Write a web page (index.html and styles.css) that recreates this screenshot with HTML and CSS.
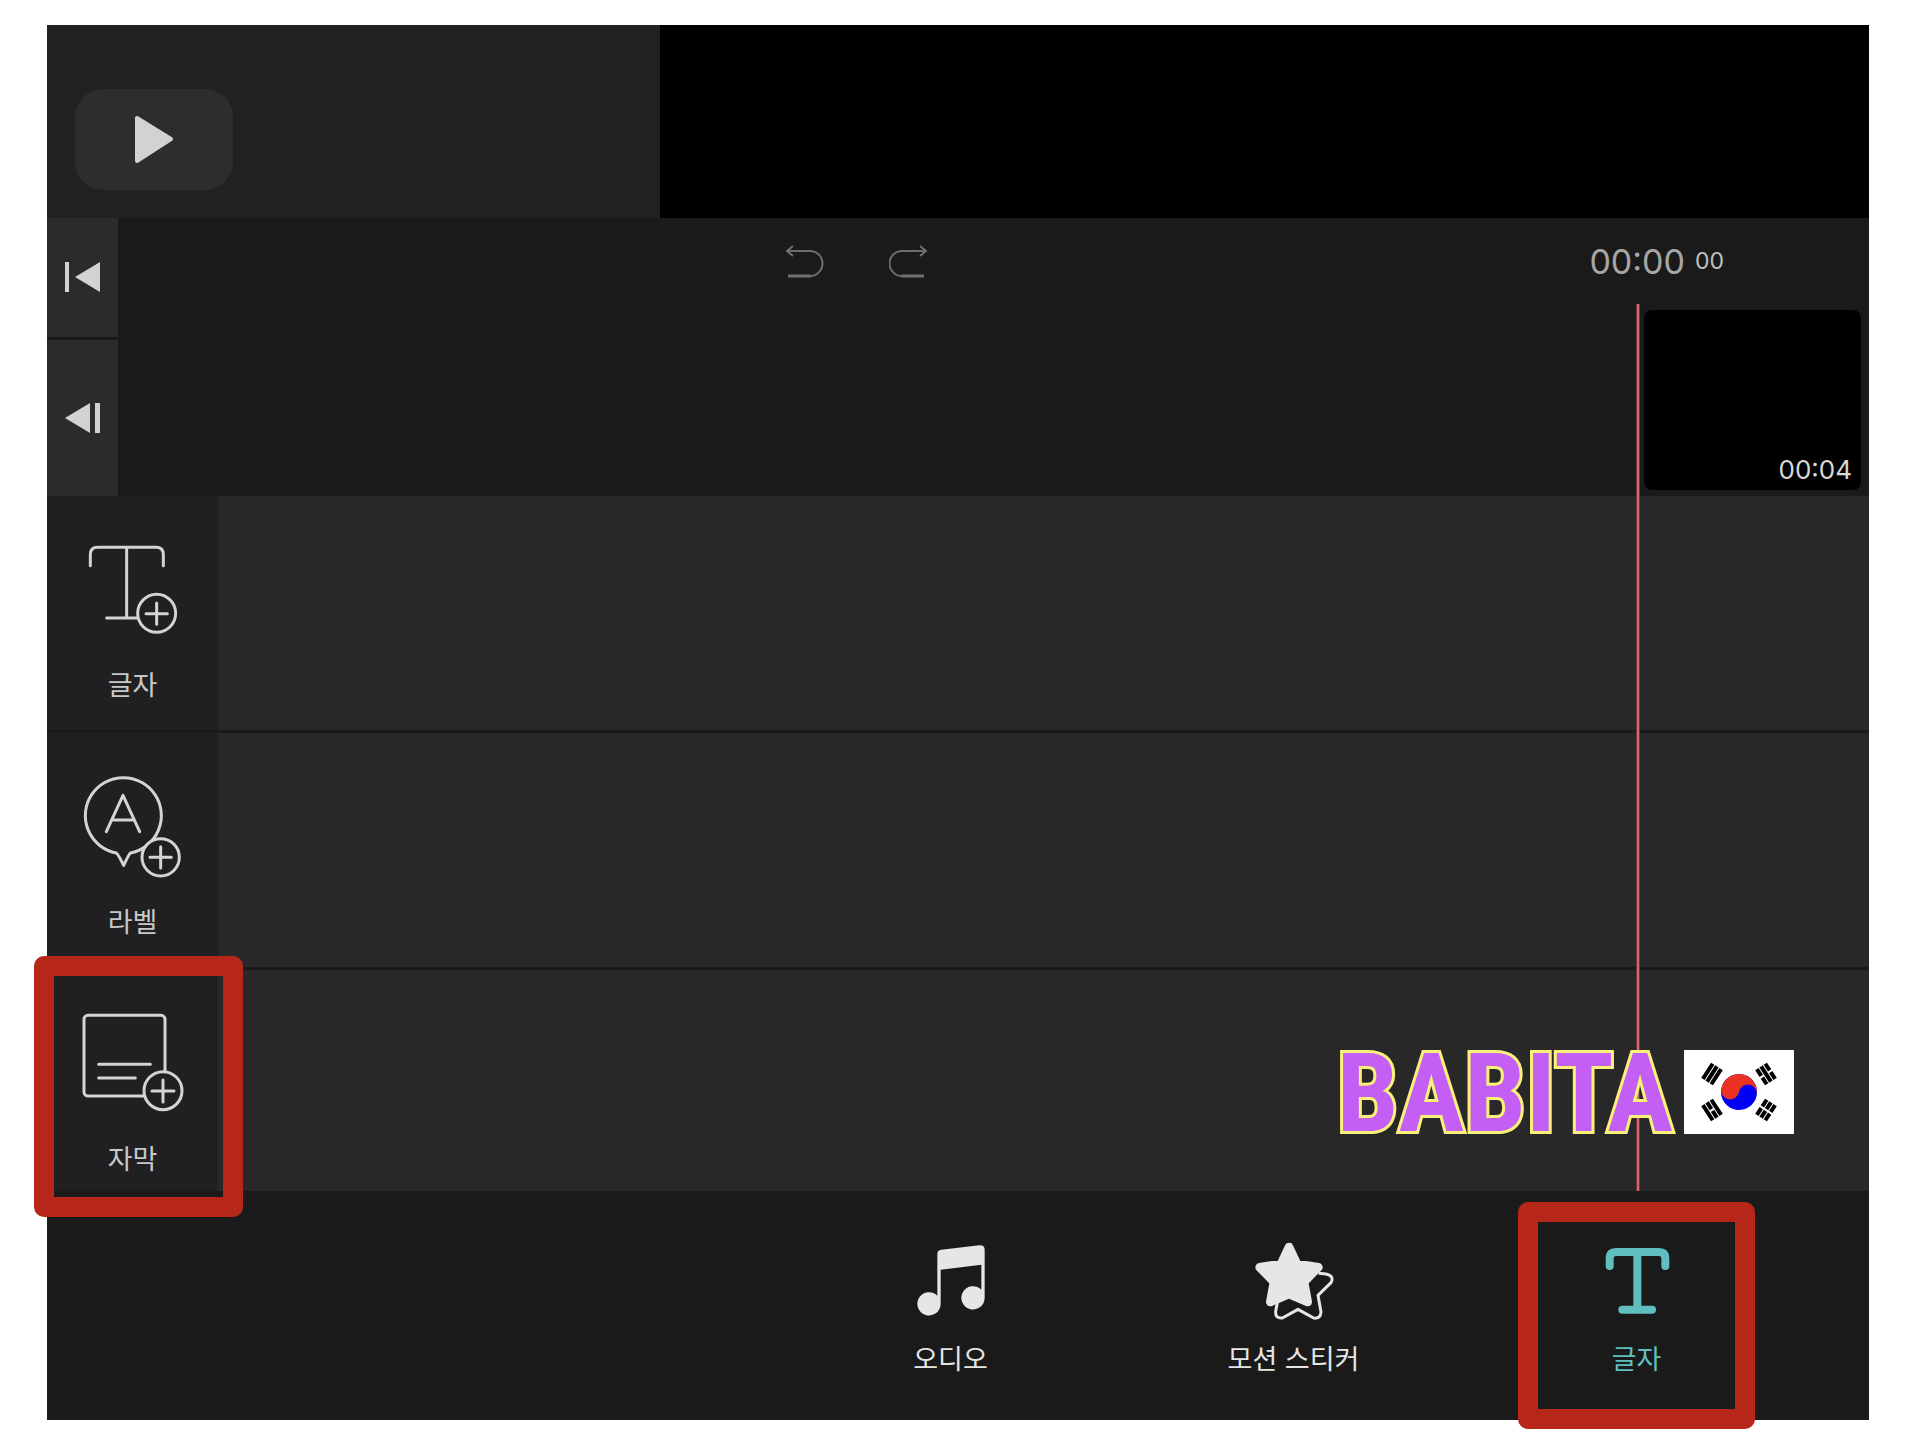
FILE: index.html
```html
<!DOCTYPE html>
<html lang="ko">
<head>
  <meta charset="UTF-8" />
  <meta name="viewport" content="width=device-width, initial-scale=1.0" />
  <title>Video Editor</title>
  <link rel="stylesheet" href="styles.css">
</head>
<body>

  <main class="editor">
    <header class="player">
      <div class="player-controls">
        <button class="play-btn" type="button" aria-label="재생">
          <svg width="40" height="50" viewBox="0 0 40 50"><path d="M3 3v43L37 24z" fill="#d2d2d2" stroke="#d2d2d2" stroke-width="4" stroke-linejoin="round"/></svg>
        </button>
      </div>
      <div class="preview"></div>
    </header>

    <section class="timeline">
      <div class="clip-area">
        <div class="seek">
          <button class="seek-btn" type="button" aria-label="처음으로">
            <svg width="36" height="32" viewBox="1 1 36 32"><path d="M1 1h4v30H1zM36 1v30L11 16z"/></svg>
          </button>
          <button class="seek-btn seek-prev" type="button" aria-label="이전">
            <svg width="36" height="32" viewBox="1 0 36 32"><path d="M31 1h5v30h-5zM26 1v30L1 16z"/></svg>
          </button>
        </div>
        <div class="clip-main">
          <div class="toolbar">
            <div class="history">
              <button class="icon-btn" type="button" aria-label="실행 취소">
                <svg width="38" height="34" viewBox="0 0 38 34"><path d="M7 2L1 7l6 5M2 7h22a12 12 0 0 1 0 25"/><path class="thick" d="M2 32h23"/></svg>
              </button>
              <button class="icon-btn" type="button" aria-label="다시 실행">
                <svg width="38" height="34" viewBox="0 0 38 34"><path d="M31 2l6 5-6 5M36 7H13a12 12 0 0 0 0 25"/><path class="thick" d="M35 32H12"/></svg>
              </button>
            </div>
            <div class="timecode">00:00 <span class="frames">00</span></div>
          </div>
          <div class="clips">
            <div class="clip">00:04</div>
          </div>
        </div>
      </div>

      <div class="tracks">
        <div class="track">
          <button class="track-btn" type="button">
            <svg class="track-icon" viewBox="144 123 330 330">
              <path d="M181 227v-33q0-22 22-22h175q22 0 22 22v33M290 172v212M230 384h92"/>
              <circle cx="380" cy="370" r="57"/>
              <path d="M348 371h64M380 339v64"/>
            </svg>
            <span>글자</span>
          </button>
          <div class="track-lane"></div>
        </div>
        <div class="track">
          <button class="track-btn" type="button">
            <svg class="track-icon" viewBox="144 112 330 330">
              <path d="M259 367A114 114 0 1 1 301 367Q296 372 281 404Q264 370 259 367z"/>
              <path d="M229 303L279 194L329 303M244 268h69"/>
              <circle class="badge" cx="392" cy="380" r="56"/>
              <path d="M360 380h64M392 348v64"/>
            </svg>
            <span>라벨</span>
          </button>
          <div class="track-lane"></div>
        </div>
        <div class="track track-last">
          <button class="track-btn marked" type="button">
            <svg class="track-icon" viewBox="174 196 330 330">
              <rect x="192" y="227" width="243" height="242" rx="12"/>
              <path d="M236 374h155M236 415h110"/>
              <circle class="badge" cx="429" cy="453" r="57"/>
              <path d="M396 454h66M429 421v66"/>
            </svg>
            <span>자막</span>
          </button>
          <div class="track-lane"></div>
        </div>
      </div>

      <div class="playhead"></div>

      <div class="sticker">
        <span class="sticker-text">BABITA</span>
        <svg class="flag" viewBox="0 0 110 84" role="img" aria-label="태극기">
          <rect width="110" height="84" fill="#fff"/>
          <g transform="rotate(10 55 42)">
            <circle cx="55" cy="42" r="18" fill="#0000f5"/>
            <path d="M37 42a18 18 0 0 1 36 0a9 9 0 0 0-18 0a9 9 0 0 1-18 0" fill="#eb3323"/>
          </g>
          <g stroke="#000" stroke-width="4">
            <path transform="translate(28 24) rotate(-57)" d="M-9-5H9M-9 0H9M-9 5H9"/>
            <path transform="translate(82 60) rotate(-57)" d="M-9-5h8M1-5h8M-9 0h8M1 0h8M-9 5h8M1 5h8"/>
            <path transform="translate(82 24) rotate(57)" d="M-9-5h8M1-5h8M-9 0H9M-9 5h8M1 5h8"/>
            <path transform="translate(28 60) rotate(57)" d="M-9-5H9M-9 0h8M1 0h8M-9 5H9"/>
          </g>
        </svg>
      </div>
    </section>

    <nav class="menu">
      <button class="menu-btn" type="button">
        <svg class="menu-icon" viewBox="63 63 240 240">
          <path d="M142 102q0-12 12-13l114-13q16-1 16 13v146a35 35 0 1 1-10-26v-75l-122 15v104a35 35 0 1 1-10-26z" fill="currentColor"/>
        </svg>
        <span>오디오</span>
      </button>
      <button class="menu-btn" type="button">
        <svg class="menu-icon" viewBox="1091 63 240 240">
          <path d="M1285 160l22 2q26 6 15 26l-39 38 9 50q-1 21-22 18l-47-26-47 26q-22 2-20-20l5-26" fill="none" stroke="currentColor" stroke-width="9" stroke-linejoin="round"/>
          <path d="M1196 81l24 51 64 10-43 44 11 60-56-24-56 24 11-60-43-44 64-10z" fill="currentColor" stroke="currentColor" stroke-width="26" stroke-linejoin="round"/>
        </svg>
        <span>모션 스티커</span>
      </button>
      <button class="menu-btn active marked" type="button">
        <svg class="menu-icon" viewBox="291 183 240 240">
          <path d="M329 258v-23q0-19 19-19h129q19 0 19 19v23M412 216v173M367 389h89" fill="none" stroke="currentColor" stroke-width="24" stroke-linecap="round"/>
        </svg>
        <span>글자</span>
      </button>
    </nav>
  </main>

</body>
</html>
```
FILE: styles.css
```css
* { box-sizing: border-box; }

body {
  margin: 0;
  padding: 25px 43px 32px 47px;
  background: #fff;
  color: #d0d0d0;
  font-family: Inter, "Noto Sans CJK KR", sans-serif;
}

button {
  margin: 0;
  padding: 0;
  border: 0;
  background: none;
  color: inherit;
  font: inherit;
  cursor: pointer;
}

svg {
  display: block;
}

.editor {
  background: #1a1a1a;
}

/* PLAYER */
.player {
  display: flex;
}

.player-controls {
  flex: 0 0 613px;
  padding: 64px 28px 28px;
  background: #212121;
}

.play-btn {
  display: flex;
  justify-content: center;
  align-items: center;
  width: 158px;
  height: 101px;
  border-radius: 28px;
  background: #2d2d2d;
}

.preview {
  flex: 1;
  background: #000;
}

/* TIMELINE */
.timeline {
  position: relative;
}

.clip-area {
  display: flex;
}

.seek {
  flex: 0 0 71px;
  display: flex;
  flex-direction: column;
  gap: 3px;
}

.seek-btn {
  flex: 0 0 119px;
  display: flex;
  justify-content: center;
  align-items: center;
  background: #2b2b2b;
  fill: #d2d2d2;
}

.seek-btn svg {
  overflow: visible;
}

.seek-prev {
  flex: 1;
}

.clip-main {
  flex: 1;
}

.toolbar {
  display: flex;
  justify-content: space-between;
  align-items: center;
  height: 86px;
  padding: 0 145px 0 668px;
}

.history {
  display: flex;
  gap: 65px;
}

.icon-btn {
  fill: none;
  stroke: #6e6e6e;
  stroke-width: 2;
}

.icon-btn .thick {
  stroke-width: 3;
}

.timecode {
  display: flex;
  align-items: center;
  gap: 10px;
  color: #a6a6a6;
  font-size: 34px;
}

.frames {
  color: #c0c0c0;
  font-size: 23px;
}

.clips {
  display: flex;
  justify-content: flex-end;
  padding: 6px 8px;
}

.clip {
  display: flex;
  justify-content: flex-end;
  align-items: flex-end;
  width: 217px;
  height: 180px;
  padding: 5px 9px;
  border-radius: 8px;
  background: #000;
  color: #d8d8d8;
  font-size: 26px;
  line-height: 30px;
}

/* TRACKS */
.tracks {
  display: flex;
  flex-direction: column;
  gap: 3px;
}

.track {
  display: flex;
  min-height: 234px;
}

.track-last {
  min-height: 221px;
}

.track-btn {
  position: relative;
  flex: 0 0 171px;
  display: flex;
  flex-direction: column;
  align-items: center;
  gap: 30px;
  padding-top: 35px;
  background: #202022;
  color: #c8c8c8;
  font-size: 27px;
  line-height: 30px;
}

.track-icon {
  width: 110px;
  height: 110px;
  fill: none;
  stroke: #d4d4d6;
  stroke-width: 9;
  stroke-linecap: round;
  stroke-linejoin: round;
}

.track-icon .badge {
  fill: #202022;
}

.track-lane {
  flex: 1;
  background: #282828;
}

.playhead {
  position: absolute;
  top: 86px;
  right: 229px;
  bottom: 0;
  width: 4px;
  border: solid #7a2c30;
  border-width: 0 1px;
  background: #c86e70;
}

.sticker {
  position: absolute;
  right: 75px;
  bottom: 55px;
  display: flex;
  align-items: center;
  gap: 11px;
}

.sticker-text {
  padding-top: 4px;
  color: #c45ff6;
  font-family: "Roboto Condensed", "Open Sans Condensed", "Noto Sans CJK KR", sans-serif;
  font-size: 110px;
  font-weight: 700;
  line-height: 84px;
  -webkit-text-stroke: 6px #fbf07a;
  paint-order: stroke fill;
}

.flag {
  width: 110px;
  height: 84px;
}

/* BOTTOM MENU */
.menu {
  display: flex;
  justify-content: flex-end;
  padding-right: 61px;
}

.menu-btn {
  position: relative;
  flex: 0 0 343px;
  display: flex;
  flex-direction: column;
  align-items: center;
  gap: 24px;
  padding: 50px 0 45px;
  color: #e6e6e6;
  font-size: 27px;
  line-height: 30px;
}

.menu-icon {
  width: 80px;
  height: 80px;
}

.menu-btn.active {
  color: #60bfbe;
}

/* RED FRAMES */
.marked::after {
  content: "";
  position: absolute;
  z-index: 1;
  border: 20px solid #b72719;
  border-radius: 10px;
}

.track-btn.marked::after {
  inset: -14px -25px -26px -13px;
}

.menu-btn.marked::after {
  inset: 11px 53px -9px;
}
```
